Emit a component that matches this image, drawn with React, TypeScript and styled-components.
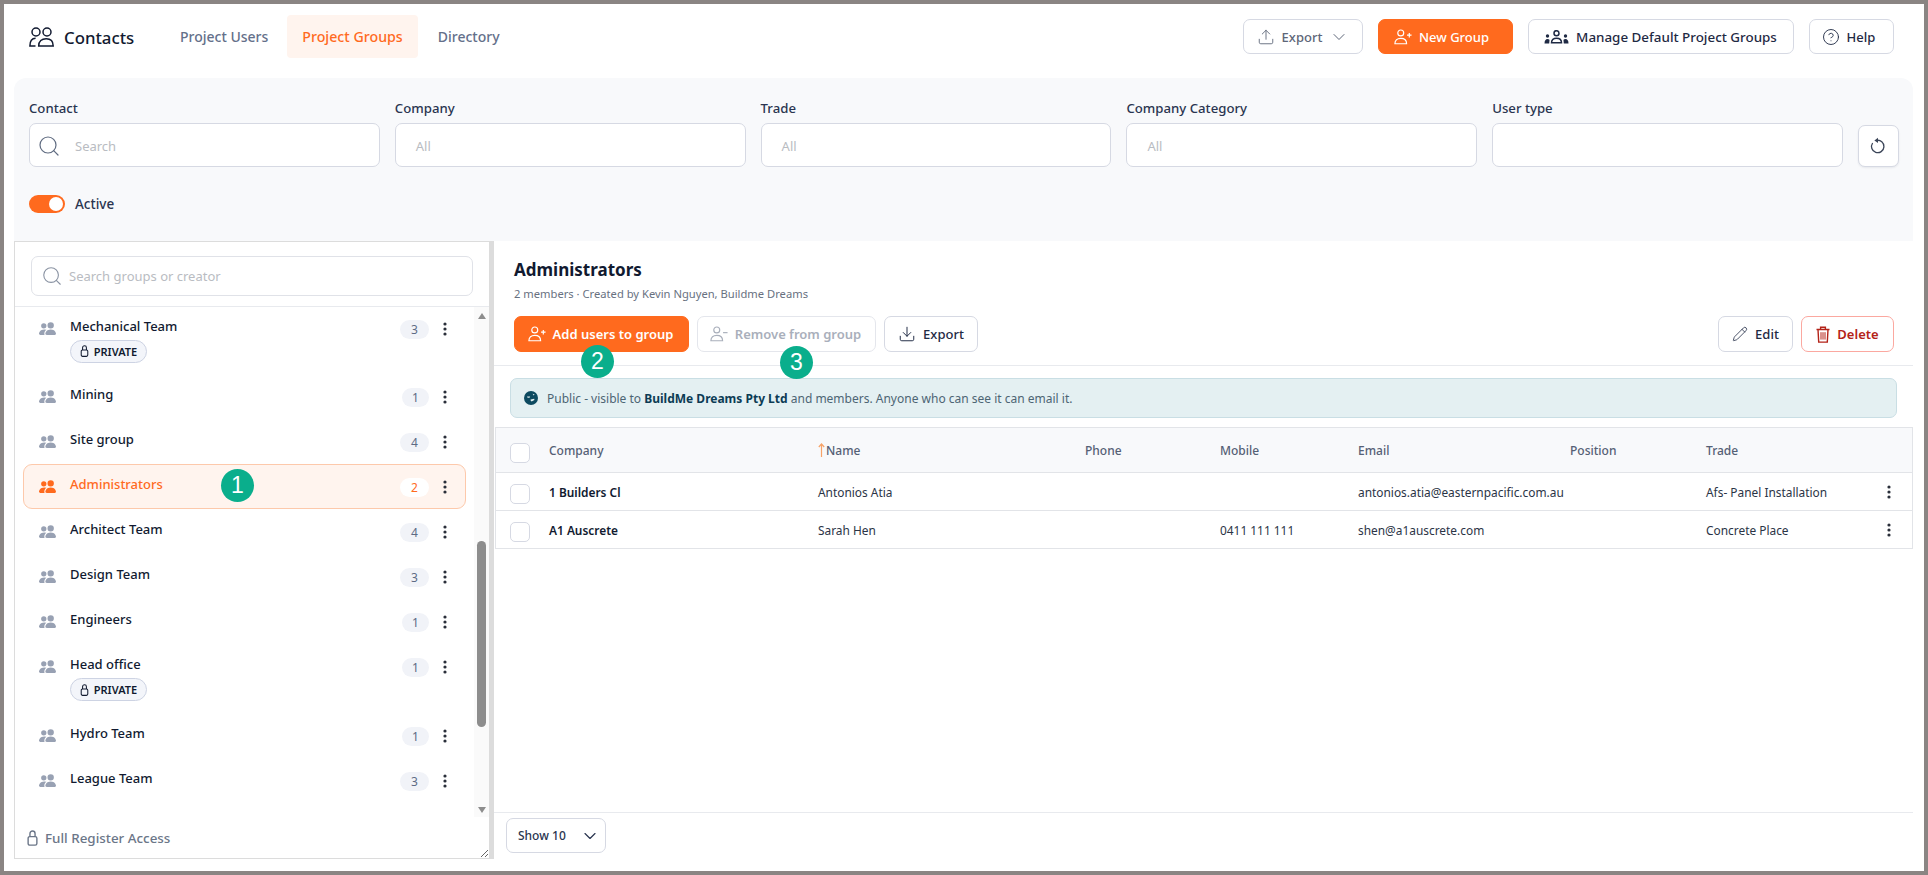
import React from "react";
import styled, { createGlobalStyle } from "styled-components";
import { ChevronDown, CircleHelp, Download, Pencil, Search, Upload } from "lucide-react";
import { BsPeopleFill } from "react-icons/bs";

const ORANGE = "#ff6a1e";
const NAVY = "#1f2a44";
const LINE = "#d6d9e3";

const Global = createGlobalStyle`
  html, body { margin: 0; padding: 0; background: #8a8583; }
  * { box-sizing: border-box; }
  body { font-family: "Noto Sans", "Open Sans", sans-serif; color: ${NAVY}; font-size: 13px; }
`;

const Shell = styled.div`
  margin: 4px;
  width: 1920px;
  height: 867px;
  background: #fff;
  padding: 0 11px 12px 10px;
  display: flex;
  flex-direction: column;
  overflow: hidden;
`;

const TopBar = styled.header`
  height: 74px;
  flex: none;
  display: flex;
  align-items: flex-start;
  padding: 11px 19px 0 15px;
`;
const Brand = styled.div`
  display: flex;
  align-items: center;
  gap: 10px;
  height: 44px;
  width: 135px;
  font-size: 16.8px;
  font-weight: 500;
  color: #111a30;
`;
const Tabs = styled.nav`
  display: flex;
`;
const Tab = styled.div<{ $active?: boolean }>`
  height: 43px;
  padding: 0 ${(p) => (p.$active ? "15px" : "16px")} 1px;
  border-radius: 4px;
  display: flex;
  align-items: center;
  font-size: ${(p) => (p.$active ? "14.2px" : "14px")};
  font-weight: 500;
  color: ${(p) => (p.$active ? ORANGE : "#64708a")};
  background: ${(p) => (p.$active ? "#fff4ee" : "transparent")};
  margin: 0 ${(p) => (p.$active ? "4px" : "0")} 0 ${(p) => (p.$active ? "3px" : "0")};
`;
const TopActions = styled.div`
  margin-left: auto;
  margin-top: 4px;
  display: flex;
  gap: 15px;
`;
const Button = styled.button<{
  $tone?: "primary" | "muted" | "danger" | "ghost";
  $w: number;
  $h?: number;
  $pr?: number;
  $fs?: number;
  $strong?: boolean;
}>`
  width: ${(p) => p.$w}px;
  height: ${(p) => p.$h ?? 36}px;
  flex: none;
  display: inline-flex;
  align-items: center;
  justify-content: center;
  gap: 7px;
  padding: 0 ${(p) => p.$pr ?? 0}px 0 0;
  border-radius: 7px;
  font-family: "Noto Sans", sans-serif;
  font-size: ${(p) => p.$fs ?? 13}px;
  font-weight: ${(p) => (p.$strong ? 600 : 500)};
  cursor: pointer;
  background: ${(p) => (p.$tone === "primary" ? ORANGE : "#fff")};
  color: ${(p) =>
    p.$tone === "primary" ? "#fff" : p.$tone === "muted" ? "#a9afbb" : p.$tone === "danger" ? "#b42318" : p.$tone === "ghost" ? "#5d6678" : NAVY};
  border: 1px solid
    ${(p) => (p.$tone === "primary" ? ORANGE : p.$tone === "danger" ? "#fba8a0" : p.$tone === "muted" ? "#e4e6ec" : LINE)};
`;

const FilterPanel = styled.section`
  flex: none;
  height: 163px;
  background: #f8f9fb;
  border-radius: 12px 12px 0 0;
  padding: 21px 14px 0 15px;
`;
const FilterRow = styled.div`
  display: flex;
  align-items: flex-end;
  gap: 15px;
`;
const Field = styled.label`
  width: 351px;
  display: flex;
  flex-direction: column;
  gap: 6px;
  font-size: 13.2px;
  font-weight: 500;
  line-height: 18px;
  color: #2a3550;
`;
const FieldBox = styled.div<{ $indent: number }>`
  height: 44px;
  background: #fff;
  border: 1px solid ${LINE};
  border-radius: 7px;
  display: flex;
  align-items: center;
  gap: 14px;
  padding: 2px 0 0 ${(p) => p.$indent}px;
  font-size: 13px;
  font-weight: 400;
  color: #b9bcc2;
`;
const ResetButton = styled(Button)`
  box-shadow: 0 1px 2px rgba(30, 40, 70, 0.08);
`;
const ActiveRow = styled.div`
  margin-top: 28px;
  display: flex;
  align-items: center;
  gap: 10px;
  font-size: 13.5px;
  font-weight: 500;
  color: #2a3550;
`;
const Toggle = styled.span`
  width: 36px;
  height: 18px;
  border-radius: 9px;
  background: ${ORANGE};
  display: flex;
  justify-content: flex-end;
  align-items: center;
  padding-right: 2px;
  &::after {
    content: "";
    width: 14px;
    height: 14px;
    border-radius: 50%;
    background: #fff;
  }
`;

const Workspace = styled.div`
  flex: 1;
  min-height: 0;
  display: flex;
`;
const Sidebar = styled.aside`
  width: 480px;
  flex: none;
  display: flex;
  flex-direction: column;
  border: 1px solid #dcdcdc;
  border-right-width: 5px;
  resize: horizontal;
  overflow: hidden;
  background: #fff;
`;
const SearchZone = styled.div`
  flex: none;
  padding: 14px 16px 10px;
  border-bottom: 1px solid #e8eaee;
`;
const SearchBox = styled.div`
  height: 40px;
  border: 1px solid #e0e2e8;
  border-radius: 7px;
  display: flex;
  align-items: center;
  gap: 6px;
  padding-left: 9px;
  color: #b9bcc2;
  font-size: 13px;
`;
const ListArea = styled.div`
  flex: 1;
  min-height: 0;
  display: flex;
`;
const Rows = styled.div`
  flex: 1;
  min-width: 0;
  overflow: hidden;
  padding: 0 8px;
  margin-top: -1.5px;
`;
const Row = styled.div<{ $selected?: boolean; $private?: boolean }>`
  position: relative;
  display: flex;
  align-items: flex-start;
  height: ${(p) => (p.$private ? "68.5px" : "45px")};
  padding: 9px 0 0 15px;
  border: 1px solid ${(p) => (p.$selected ? "#fdc9ab" : "transparent")};
  border-radius: 9px;
  background: ${(p) => (p.$selected ? "#fff4ee" : "transparent")};
`;
const RowIcon = styled.span<{ $selected?: boolean }>`
  width: 31px;
  flex: none;
  margin-top: 4px;
  display: flex;
  color: ${(p) => (p.$selected ? ORANGE : "#98a1b3")};
`;
const RowBody = styled.div`
  flex: 1;
  min-width: 0;
`;
const RowName = styled.div<{ $selected?: boolean }>`
  font-size: 13px;
  font-weight: 500;
  line-height: 20px;
  color: ${(p) => (p.$selected ? ORANGE : "#111a30")};
`;
const PrivatePill = styled.span`
  margin-top: 4px;
  width: 77px;
  height: 23px;
  border: 1px solid #cdd3e3;
  border-radius: 12px;
  background: #f3f5fa;
  display: flex;
  align-items: center;
  justify-content: center;
  gap: 5px;
  font-size: 11px;
  font-weight: 600;
  color: #111a30;
`;
const Count = styled.span<{ $selected?: boolean; $wide?: boolean }>`
  width: ${(p) => (p.$wide ? "29px" : "27px")};
  height: 19px;
  margin-top: 4px;
  margin-right: 11px;
  border-radius: 10px;
  background: ${(p) => (p.$selected ? "#fff" : "#f1f3f8")};
  color: ${(p) => (p.$selected ? ORANGE : "#5d6b85")};
  display: flex;
  align-items: center;
  justify-content: center;
  font-size: 12px;
`;
const RowMenu = styled.span`
  width: 10px;
  margin-right: 15px;
  margin-top: 6px;
  display: flex;
  justify-content: center;
  color: #2a2f3a;
`;
const Marker = styled.span<{ $x: number; $y: number }>`
  position: absolute;
  left: ${(p) => p.$x}px;
  top: ${(p) => p.$y}px;
  width: 33px;
  height: 33px;
  border-radius: 50%;
  background: #0aae8c;
  color: #fff;
  display: flex;
  align-items: center;
  justify-content: center;
  font: 400 23px "Liberation Sans", Arial, sans-serif;
  z-index: 2;
`;
const Track = styled.div`
  width: 15px;
  flex: none;
  background: #fafafa;
  display: flex;
  flex-direction: column;
  align-items: center;
`;
const TrackArrow = styled.span<{ $down?: boolean }>`
  margin: ${(p) => (p.$down ? "auto 0 4px" : "6px 0 0")};
  width: 0;
  height: 0;
  border-left: 4.5px solid transparent;
  border-right: 4.5px solid transparent;
  ${(p) => (p.$down ? "border-top: 6px solid #8d8d8d;" : "border-bottom: 6px solid #8d8d8d;")}
`;
const Thumb = styled.span`
  margin-top: 222px;
  width: 9px;
  height: 186px;
  border-radius: 5px;
  background: #8d8d8d;
`;
const SideFooter = styled.div`
  flex: none;
  height: 41px;
  display: flex;
  align-items: center;
  gap: 7px;
  padding: 0 0 0 12px;
  color: #6b7688;
  font-size: 13.4px;
  font-weight: 500;
  background: #fff;
`;

const Main = styled.main`
  flex: 1;
  min-width: 0;
  display: flex;
  flex-direction: column;
`;
const Heading = styled.div`
  padding: 18px 0 0 20px;
`;
const Title = styled.h1`
  margin: 0;
  font-size: 17px;
  font-weight: 700;
  line-height: 22px;
  color: #111a30;
`;
const Subtitle = styled.p`
  margin: 4px 0 0;
  font-size: 11.2px;
  line-height: 18px;
  color: #68717f;
`;
const ActionBar = styled.div`
  margin-top: 13px;
  padding: 0 19px 13px 20px;
  border-bottom: 1px solid #e8eaee;
  display: flex;
  gap: 8px;
`;
const ActionGroup = styled.div`
  position: relative;
  display: flex;
`;
const ActionSpacer = styled.div`
  flex: 1;
`;
const Notice = styled.div`
  margin: 12px 16px 0;
  height: 40px;
  display: flex;
  align-items: center;
  gap: 9px;
  padding-left: 13px;
  background: #e4f0f2;
  border: 1px solid #c9dee4;
  border-radius: 7px;
  font-size: 12px;
  color: #4d6574;
  b {
    color: #0c3c55;
    font-weight: 700;
  }
`;
const Table = styled.div`
  margin: 9px 0 0 1px;
  border: 1px solid #e2e4e8;
  border-bottom: 0;
`;
const TableRow = styled.div<{ $head?: boolean }>`
  display: grid;
  grid-template-columns: 53px 269px 267px 135px 138px 212px 136px 174px 31px;
  align-items: center;
  height: ${(p) => (p.$head ? "45px" : "38px")};
  border-bottom: 1px solid #e2e4e8;
  background: ${(p) => (p.$head ? "#f8f9fb" : "#fff")};
  font-size: ${(p) => (p.$head ? "12px" : "11.9px")};
  font-weight: ${(p) => (p.$head ? 500 : 400)};
  color: ${(p) => (p.$head ? "#556075" : "#2b3446")};
`;
const Check = styled.span`
  width: 20px;
  height: 20px;
  margin: 5px 0 0 14px;
  border: 1px solid ${LINE};
  border-radius: 5px;
  background: #fff;
  display: block;
`;
const CompanyCell = styled.span`
  font-weight: 600;
  color: #111a30;
`;
const HeadCell = styled.span`
  display: flex;
  align-items: center;
  gap: 1px;
`;
const CellNowrap = styled.span`
  white-space: nowrap;
`;
const TableMenu = styled.span`
  padding-left: 7px;
  display: flex;
  color: #2a2f3a;
`;
const Spacer = styled.div`
  flex: 1;
`;
const MainFooter = styled.div`
  flex: none;
  height: 47px;
  border-top: 1px solid #e8eaee;
  padding: 5px 0 0 12px;
`;
const PageSize = styled.div`
  width: 100px;
  height: 35px;
  border: 1px solid ${LINE};
  border-radius: 7px;
  display: flex;
  align-items: center;
  justify-content: space-between;
  padding: 0 5px 0 11px;
  font-size: 12px;
  font-weight: 500;
  color: #2a3550;
`;

const Dots = () => (
  <svg width="4" height="14" viewBox="0 0 4 14" fill="currentColor">
    <circle cx="2" cy="2" r="1.6" />
    <circle cx="2" cy="7" r="1.6" />
    <circle cx="2" cy="12" r="1.6" />
  </svg>
);
const LockIcon = ({ w = 9, h = 12 }: { w?: number; h?: number }) => (
  <svg width={w} height={h} viewBox="0 0 10 15" fill="none" stroke="currentColor" strokeWidth="1.3">
    <rect x="0.9" y="6.2" width="8.2" height="8" rx="1.6" />
    <path d="M2.6 6.2V3.4a2.4 2.4 0 0 1 4.8 0v2.8" />
  </svg>
);
const ContactsIcon = () => (
  <svg width="25" height="20" viewBox="0 0 25 20" fill="none" stroke="#111a30" strokeWidth="1.5">
    <circle cx="7" cy="5" r="4" />
    <circle cx="18" cy="5" r="4" />
    <path d="M9.7 18.9c0-4.6 3-7.2 7.5-7.2s7 2.6 7 7.2z" />
    <path d="M6.6 11.2C3 11.3.9 14 .9 18.9h5.6" />
  </svg>
);
const UserPlusIcon = ({ minus }: { minus?: boolean }) => (
  <svg width="18" height="16" viewBox="0 0 20 17" fill="none" stroke="currentColor" strokeWidth="1.3">
    <circle cx="7.5" cy="4" r="3.3" />
    <path d="M1 16h13c0-3.8-2.6-6-6.5-6S1 12.2 1 16z" />
    <path d={minus ? "M14.5 7h5" : "M14.5 6.5h5M17 4v5"} />
  </svg>
);
const ManageIcon = () => (
  <svg width="25" height="14" viewBox="0 0 25 14" fill="none">
    <circle cx="12.5" cy="3.2" r="2.5" stroke={NAVY} strokeWidth="1.5" />
    <path d="M7.5 12.8c0-3 2-4.6 5-4.6s5 1.6 5 4.6z" stroke={NAVY} strokeWidth="1.5" />
    <circle cx="3.5" cy="6" r="1.7" fill={NAVY} />
    <path d="M.5 13.5c0-3 1.2-4.5 3-4.5s2 .8 2 1.5l-.3 3z" fill={NAVY} />
    <circle cx="21.5" cy="6" r="1.7" fill={NAVY} />
    <path d="M24.5 13.5c0-3-1.2-4.5-3-4.5s-2 .8-2 1.5l.3 3z" fill={NAVY} />
  </svg>
);
const ResetIcon = () => (
  <svg width="16" height="18" viewBox="0 0 16 18" fill="none">
    <path d="M6.5 3.4A6.2 6.2 0 1 1 2.6 6" stroke="#3b4558" strokeWidth="1.3" />
    <path d="M8 .8v5.2L4.4 3.4z" fill="#3b4558" />
  </svg>
);
const TrashIcon = () => (
  <svg width="14" height="17" viewBox="0 0 14 17" fill="none" stroke="currentColor" strokeWidth="1.4">
    <path d="M.5 3.5h13M4.6 3.5V1.2h4.8v2.3M2 3.5l.7 12.6h8.6L12 3.5" />
    <path d="M5 6.2v7.4M7 6.2v7.4M9 6.2v7.4" strokeWidth="1" />
  </svg>
);
const GlobeIcon = () => (
  <svg width="14" height="14" viewBox="0 0 14 14">
    <circle cx="7" cy="7" r="7" fill="#0d4a60" />
    <path d="M3 5.6h3.2l-.7 1.2H3.6zM8.6 2.8l2 .6-1 1.2zM6.6 8.4l3.6-.6.2 1.2-2.8 1.6-1-1z" fill="#e4f0f2" />
  </svg>
);
const SortArrowIcon = () => (
  <svg width="7" height="14" viewBox="0 0 7 14" fill="none" stroke="#f7a368" strokeWidth="1.2">
    <path d="M3.5 14V1M.8 4l2.7-3 2.7 3" />
  </svg>
);

type Group = { name: string; count: string; isPrivate?: boolean; selected?: boolean };
const groups: Group[] = [
  { name: "Mechanical Team", count: "3", isPrivate: true },
  { name: "Mining", count: "1" },
  { name: "Site group", count: "4" },
  { name: "Administrators", count: "2", selected: true },
  { name: "Architect Team", count: "4" },
  { name: "Design Team", count: "3" },
  { name: "Engineers", count: "1" },
  { name: "Head office", count: "1", isPrivate: true },
  { name: "Hydro Team", count: "1" },
  { name: "League Team", count: "3" },
  { name: "", count: "" },
];

const columns = ["Company", "Name", "Phone", "Mobile", "Email", "Position", "Trade"];
const members = [
  ["1 Builders Cl", "Antonios Atia", "", "", "antonios.atia@easternpacific.com.au", "", "Afs- Panel Installation"],
  ["A1 Auscrete", "Sarah Hen", "", "0411 111 111", "shen@a1auscrete.com", "", "Concrete Place"],
];

export default function App() {
  return (
    <>
      <Global />
      <Shell>
        <TopBar>
          <Brand>
            <ContactsIcon />
            Contacts
          </Brand>
          <Tabs>
            <Tab>Project Users</Tab>
            <Tab $active>Project Groups</Tab>
            <Tab>Directory</Tab>
          </Tabs>
          <TopActions>
            <Button $tone="ghost" $w={120} $h={35}>
              <Upload size={18} strokeWidth={1.2} />
              Export
              <ChevronDown size={20} strokeWidth={1.2} />
            </Button>
            <Button $tone="primary" $w={135} $h={35} $pr={8}>
              <UserPlusIcon />
              New Group
            </Button>
            <Button $w={266} $h={35} $fs={13.4} $pr={1}>
              <ManageIcon />
              Manage Default Project Groups
            </Button>
            <Button $w={85} $h={35} $pr={6}>
              <CircleHelp size={18} strokeWidth={1.2} />
              Help
            </Button>
          </TopActions>
        </TopBar>

        <FilterPanel>
          <FilterRow>
            <Field>
              Contact
              <FieldBox $indent={7}>
                <Search size={24} strokeWidth={1.2} color="#5f6b80" />
                Search
              </FieldBox>
            </Field>
            <Field>
              Company
              <FieldBox $indent={20}>All</FieldBox>
            </Field>
            <Field>
              Trade
              <FieldBox $indent={20}>All</FieldBox>
            </Field>
            <Field>
              Company Category
              <FieldBox $indent={20}>All</FieldBox>
            </Field>
            <Field>
              User type
              <FieldBox $indent={20} />
            </Field>
            <ResetButton $w={41} $h={42}>
              <ResetIcon />
            </ResetButton>
          </FilterRow>
          <ActiveRow>
            <Toggle />
            Active
          </ActiveRow>
        </FilterPanel>

        <Workspace>
          <Sidebar>
            <SearchZone>
              <SearchBox>
                <Search size={22} strokeWidth={1.2} color="#8a93a3" />
                Search groups or creator
              </SearchBox>
            </SearchZone>
            <ListArea>
              <Rows>
                {groups.map((g, i) => (
                  <Row key={i} $selected={g.selected} $private={g.isPrivate}>
                    <RowIcon $selected={g.selected}>
                      <BsPeopleFill size={17} />
                    </RowIcon>
                    <RowBody>
                      <RowName $selected={g.selected}>{g.name}</RowName>
                      {g.isPrivate && (
                        <PrivatePill>
                          <LockIcon />
                          PRIVATE
                        </PrivatePill>
                      )}
                    </RowBody>
                    <Count $selected={g.selected} $wide={g.count !== "1"}>
                      {g.count}
                    </Count>
                    <RowMenu>
                      <Dots />
                    </RowMenu>
                    {g.selected && <Marker $x={197} $y={4}>1</Marker>}
                  </Row>
                ))}
              </Rows>
              <Track>
                <TrackArrow />
                <Thumb />
                <TrackArrow $down />
              </Track>
            </ListArea>
            <SideFooter>
              <LockIcon w={11} h={16} />
              Full Register Access
            </SideFooter>
          </Sidebar>

          <Main>
            <Heading>
              <Title>Administrators</Title>
              <Subtitle>2 members · Created by Kevin Nguyen, Buildme Dreams</Subtitle>
            </Heading>
            <ActionBar>
              <ActionGroup>
                <Button $tone="primary" $w={175} $strong $pr={2}>
                  <UserPlusIcon />
                  Add users to group
                </Button>
                <Marker $x={67} $y={29}>2</Marker>
              </ActionGroup>
              <ActionGroup>
                <Button $tone="muted" $w={179} $strong $pr={2}>
                  <UserPlusIcon minus />
                  Remove from group
                </Button>
                <Marker $x={83} $y={30}>3</Marker>
              </ActionGroup>
              <Button $w={94}>
                <Download size={18} strokeWidth={1.3} />
                Export
              </Button>
              <ActionSpacer />
              <Button $w={75}>
                <Pencil size={16} strokeWidth={1.2} />
                Edit
              </Button>
              <Button $tone="danger" $w={93} $strong>
                <TrashIcon />
                Delete
              </Button>
            </ActionBar>
            <Notice>
              <GlobeIcon />
              <span>
                Public - visible to <b>BuildMe Dreams Pty Ltd</b> and members. Anyone who can see it can email it.
              </span>
            </Notice>
            <Table>
              <TableRow $head>
                <Check />
                {columns.map((c) => (
                  <HeadCell key={c}>
                    {c === "Name" && <SortArrowIcon />}
                    {c}
                  </HeadCell>
                ))}
                <span />
              </TableRow>
              {members.map((m) => (
                <TableRow key={m[0]}>
                  <Check />
                  <CompanyCell>{m[0]}</CompanyCell>
                  {m.slice(1).map((v, i) => (
                    <CellNowrap key={i}>{v}</CellNowrap>
                  ))}
                  <TableMenu>
                    <Dots />
                  </TableMenu>
                </TableRow>
              ))}
            </Table>
            <Spacer />
            <MainFooter>
              <PageSize>
                Show 10
                <ChevronDown size={20} strokeWidth={1.4} />
              </PageSize>
            </MainFooter>
          </Main>
        </Workspace>
      </Shell>
    </>
  );
}
